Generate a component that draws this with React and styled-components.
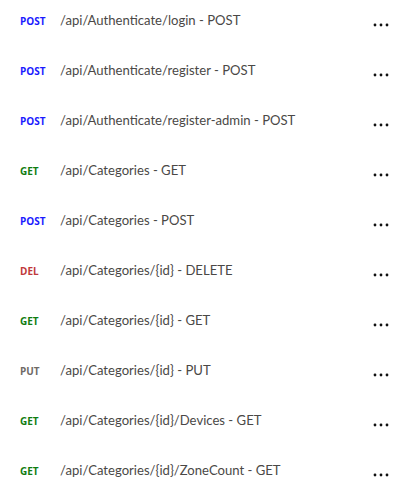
import styled, { createGlobalStyle } from "styled-components";

const GlobalStyle = createGlobalStyle`
  body {
    margin: 0;
    background: #ffffff;
    font-family: "Open Sans", "Noto Sans", sans-serif;
  }
`;

const List = styled.ul`
  list-style: none;
  margin: 0;
  padding: 0;
  width: 413px;
`;

const Row = styled.li`
  display: grid;
  grid-template-columns: 40px 1fr 40px;
  align-items: start;
  height: 50px;
  padding-left: 20px;
  box-sizing: border-box;
`;

const Method = styled.span`
  margin-top: 15px;
  font-size: 10px;
  font-weight: 700;
  line-height: 12px;
  color: ${(p) => p.color};
`;

const Path = styled.span`
  margin-top: 11px;
  font-family: Lato, "Open Sans", sans-serif;
  font-size: 13.1px;
  line-height: 18px;
  color: #4a4846;
  white-space: nowrap;
`;

const MoreButton = styled.button`
  margin-top: 21px;
  width: 16px;
  height: 8px;
  padding: 0;
  border: 0;
  background: none;
  display: flex;
  align-items: center;
  justify-content: center;
`;

const METHOD_COLORS = {
  POST: "#1a1aff",
  GET: "#107c10",
  DEL: "#c0393b",
  PUT: "#6f6a66",
};

const endpoints = [
  { method: "POST", path: "/api/Authenticate/login - POST" },
  { method: "POST", path: "/api/Authenticate/register - POST" },
  { method: "POST", path: "/api/Authenticate/register-admin - POST" },
  { method: "GET", path: "/api/Categories - GET" },
  { method: "POST", path: "/api/Categories - POST" },
  { method: "DEL", path: "/api/Categories/{id} - DELETE" },
  { method: "GET", path: "/api/Categories/{id} - GET" },
  { method: "PUT", path: "/api/Categories/{id} - PUT" },
  { method: "GET", path: "/api/Categories/{id}/Devices - GET" },
  { method: "GET", path: "/api/Categories/{id}/ZoneCount - GET" },
];

function Dots() {
  return (
    <svg width="16" height="4" viewBox="0 0 16 4">
      <circle cx="2" cy="2" r="1.4" fill="#111" />
      <circle cx="8" cy="2" r="1.4" fill="#111" />
      <circle cx="14" cy="2" r="1.4" fill="#111" />
    </svg>
  );
}

export default function App() {
  return (
    <>
      <GlobalStyle />
      <List>
        {endpoints.map((ep, i) => (
          <Row key={i}>
            <Method color={METHOD_COLORS[ep.method]}>{ep.method}</Method>
            <Path>{ep.path}</Path>
            <MoreButton aria-label="More">
              <Dots />
            </MoreButton>
          </Row>
        ))}
      </List>
    </>
  );
}
